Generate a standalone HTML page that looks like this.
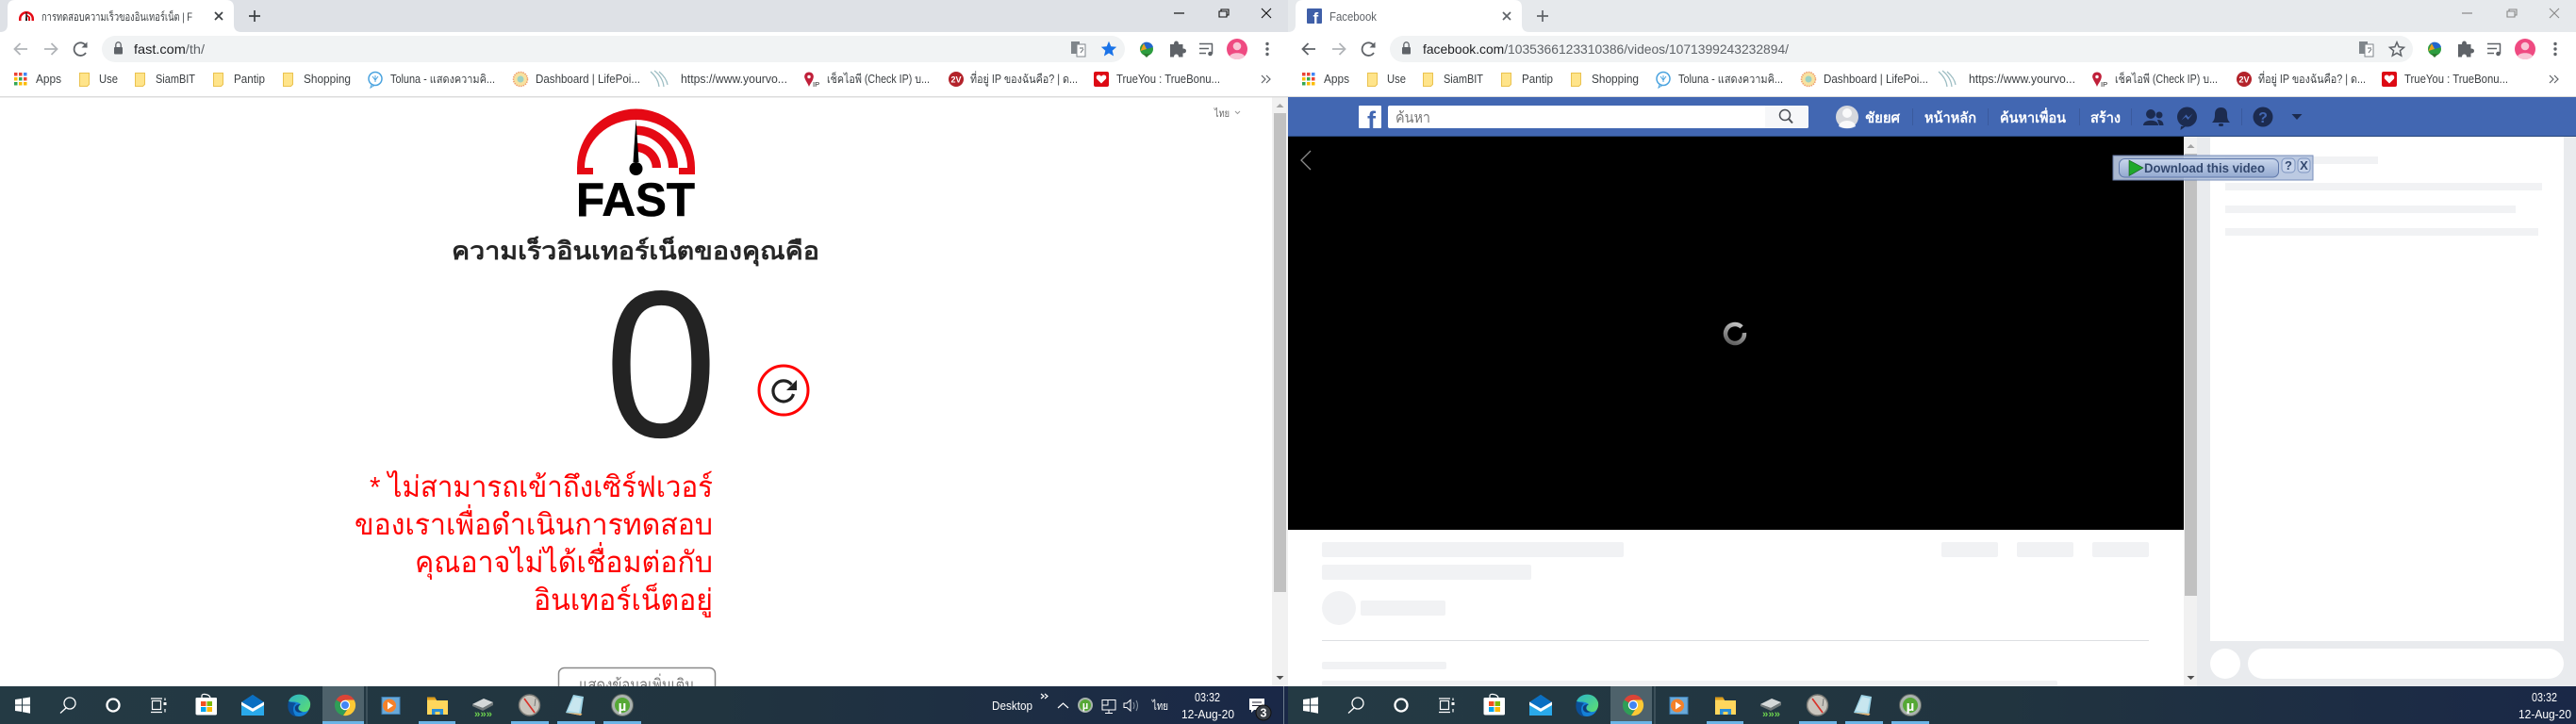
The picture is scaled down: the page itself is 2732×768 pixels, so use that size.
<!DOCTYPE html>
<html lang="th"><head><meta charset="utf-8"><title>Fast / Facebook</title>
<style>
html,body{margin:0;padding:0;background:#fff;width:2732px;height:768px;overflow:hidden}
svg{display:block;font-family:"Liberation Sans","Noto Sans CJK SC",sans-serif}
.b text{font-size:12.5px;fill:#3c4043}
.u{font-size:14px}
.t text{fill:#fff;font-size:12.5px}
.nav{font-weight:bold;font-size:15px;fill:#fff}
.r{font-size:31px;fill:#f00}
.sk{fill:#f1f2f4}
</style></head><body>
<svg width="2732" height="768" viewBox="0 0 2732 768" xmlns="http://www.w3.org/2000/svg">
<defs>
<linearGradient id="tb" x1="0" x2="1" y1="0" y2="0"><stop offset="0" stop-color="#243a44"/><stop offset=".55" stop-color="#21343f"/><stop offset="1" stop-color="#1a2847"/></linearGradient>
<linearGradient id="spin" x1="0" x2="1" y1="1" y2="0"><stop offset="0" stop-color="#555"/><stop offset="1" stop-color="#ccc"/></linearGradient>
<linearGradient id="dl" x1="0" x2="0" y1="0" y2="1"><stop offset="0" stop-color="#c9d6ec"/><stop offset="1" stop-color="#93a9d0"/></linearGradient>
<linearGradient id="edg" x1="0" x2="1" y1="0" y2="1"><stop offset="0" stop-color="#2bb5c9"/><stop offset="1" stop-color="#5ede6e"/></linearGradient>
<symbol id="folder" viewBox="0 0 11 15" overflow="visible"><path d="M.5.5H10.500V12.500L8.500 14.500H.5Z" fill="#ffe48a" stroke="#eac24f"/></symbol>
<symbol id="apps" viewBox="0 0 14 14"><g><rect x="0" y="0" width="3.500" height="3.500" fill="#ea4335"/><rect x="5" y="0" width="3.500" height="3.500" fill="#ea4335"/><rect x="10" y="0" width="3.500" height="3.500" fill="#4285f4"/><rect x="0" y="5" width="3.500" height="3.500" fill="#fbbc05"/><rect x="5" y="5" width="3.500" height="3.500" fill="#34a853"/><rect x="10" y="5" width="3.500" height="3.500" fill="#ea4335"/><rect x="0" y="10" width="3.500" height="3.500" fill="#34a853"/><rect x="5" y="10" width="3.500" height="3.500" fill="#fbbc05"/><rect x="10" y="10" width="3.500" height="3.500" fill="#fbbc05"/></g></symbol>
<g id="tbar">
<path d="M16 742 23 741V747.500H16ZM24 740.800 32 739.500V747.500H24ZM16 748.500H23V755L16 754ZM24 748.500H32V756.800L24 755.200Z" fill="#fff"/>
<circle cx="74" cy="746" r="6" fill="none" stroke="#fff" stroke-width="1.300"/><path d="M70 751 64 756.500" stroke="#fff" stroke-width="1.300"/>
<circle cx="120" cy="748" r="6.500" fill="none" stroke="#fff" stroke-width="2.300"/>
<path d="M160 741H172M160 755.500H172M175 740.500V743M175 752V755.500" stroke="#fff" stroke-width="1.200" fill="none"/><rect x="161.500" y="743.500" width="9" height="9" fill="none" stroke="#fff" stroke-width="1.200"/><rect x="173.500" y="745" width="3" height="3" fill="#fff"/>
<path d="M209 740H229Q230 740 230 741V757Q230 758.500 228.500 758.500H209.500Q207.500 758.500 207.500 757V741Q207.500 740 209 740Z" fill="#fff"/><path d="M214 740V738Q214 736 218 736.500T223 740" fill="none" stroke="#fff" stroke-width="1.200"/><rect x="213" y="744" width="5.500" height="5" fill="#f25022"/><rect x="219.500" y="744" width="5.500" height="5" fill="#7fba00"/><rect x="213" y="750" width="5.500" height="5" fill="#00a4ef"/><rect x="219.500" y="750" width="5.500" height="5" fill="#ffb900"/>
<path d="M256 745 268 737 280 745V759H256Z" fill="#2aa9ea"/><path d="M256 745 268 737 280 745 268 752Z" fill="#0a6fc2"/><path d="M256 744.500 268 751.500 280 744.500V748L268 755 256 748Z" fill="#fff"/>
<circle cx="317" cy="748.500" r="11.500" fill="#1580d6"/>
<path d="M306 744C309 735 325 733 329 745 330 752 326 756 321 755 315 754 316 749 319 747 314 743 309 745 306 744Z" fill="url(#edg)"/>
<path d="M306 744C304 752 307 759 314 760 310 755 310 749 314 746 311 745 308 745 306 744Z" fill="#0b4f98"/>
<path d="M319 747C315 749 315 754 321 755 317 757 312 755 313 750 314 748 316 747 319 747Z" fill="#0e3f7c"/>
<rect x="342" y="728" width="44" height="40" fill="#4e626b"/><rect x="342" y="765" width="44" height="3" fill="#6cb4e6"/><rect x="388" y="728" width="2" height="40" fill="#3c505a"/>
<path d="M366 748 356.500 742.500A11 11 0 0 1 376 743Z" fill="#db4437"/><path d="M366 737A11 11 0 0 1 375.500 742.500H366Z" fill="#db4437"/><path d="M356.500 742.500A11 11 0 0 0 364 759L370 748H366Z" fill="#2f9e57"/><path d="M364 759A11 11 0 0 0 375.500 742.500H366L370 750Z" fill="#fcc934"/><circle cx="366" cy="748" r="5.200" fill="#fff"/><circle cx="366" cy="748" r="4" fill="#4285f4"/>
<rect x="405" y="739.500" width="19" height="18" fill="#6aa9d8" stroke="#3e7fb3"/><circle cx="413" cy="748.500" r="7" fill="#f4812a"/><path d="M411 744.500 417 748.500 411 752.500Z" fill="#fff"/>
<path d="M453 741V758H475V743H463L461 739.500H454Z" fill="#ffd65c"/><path d="M453 739.500H461L463 742.500H453Z" fill="#dd9d1c"/><path d="M458 758V752H470V758H466.500V755H461.500V758Z" fill="#2a8fd8"/>
<path d="M501 747 513 741 523 745 512 751Z" fill="#d4d8d8"/><path d="M501 747V749L512 754 523 748V745L512 751Z" fill="#6f7778"/><text x="503" y="761" font-size="11" font-weight="bold" fill="#6cd04f" textLength="19" lengthAdjust="spacingAndGlyphs">&#187;&#187;&#187;</text>
<circle cx="561.500" cy="748" r="11" fill="#c9c5bd" stroke="#7a7a75" stroke-width="1.500"/><path d="M556 741 567 756" stroke="#d8332b" stroke-width="1.700"/><path d="M568 741 567 749" stroke="#777" stroke-width="1"/>
<path d="M600 756 608 737 619 739 616 759Z" fill="#9fd4e6"/><path d="M600 756 616 759 617.500 757Z" fill="#e6b16c"/><path d="M602 754 609 739 617 741 614 756Z" fill="#c8e6ef"/>
<circle cx="660" cy="748" r="11.500" fill="#aab2ae" stroke="#5c6360"/><circle cx="660" cy="748" r="8" fill="#55a835"/><text x="660" y="754" font-size="15" font-weight="bold" fill="#fff" text-anchor="middle">µ</text>
<rect x="444" y="765" width="39" height="3" fill="#6cb4e6"/><rect x="542" y="765" width="40" height="3" fill="#6cb4e6"/><rect x="591" y="765" width="40" height="3" fill="#6cb4e6"/><rect x="640" y="765" width="40" height="3" fill="#6cb4e6"/>
</g>
<g id="tool">
<g transform="translate(1136,44)"><rect x="0" y="0" width="9" height="13" fill="#80868b"/><rect x="6" y="3" width="9" height="13" fill="#fff" stroke="#80868b"/><path d="M9 7H13M10 12 13 8" stroke="#80868b" stroke-width="1.200"/></g>
<circle cx="1216" cy="52" r="7" fill="#2d9d3f"/><path d="M1211 47A7 7 0 0 1 1223 50L1216 52Z" fill="#2266cc"/><path d="M1209.500 54 1216 52 1213 46Z" fill="#e8a21e"/><path d="M1212 57 1216 61 1220 57Z" fill="#2d7a30"/>
<path d="M1241 47H1245Q1245 43.500 1247.500 43.500T1250 47H1254.500V51.500Q1258 51.500 1258 54T1254.500 56.500V60.500H1250Q1250 57.500 1247.500 57.500T1245 60.500H1241Z" fill="#5f6368"/>
<path d="M1272 46.500H1286M1272 51.500H1282M1272 56.500H1279" stroke="#5f6368" stroke-width="1.500"/><path d="M1285.500 46.500V57" stroke="#5f6368" stroke-width="1.500"/><circle cx="1283.500" cy="57" r="2.300" fill="#5f6368"/>
<ellipse cx="1312" cy="52" rx="11" ry="11" fill="#ef4a81"/><circle cx="1312" cy="49" r="4.300" fill="#f9c6d6"/><path d="M1304 60C1305 55 1319 55 1320 60 1316 64 1308 64 1304 60Z" fill="#f9c6d6"/>
<circle cx="1344" cy="46.500" r="1.700" fill="#5f6368"/><circle cx="1344" cy="52" r="1.700" fill="#5f6368"/><circle cx="1344" cy="57.500" r="1.700" fill="#5f6368"/>
</g>
<g id="bookicons">
<use href="#apps" x="15" y="77" width="14" height="14"/>
<use href="#folder" x="84" y="77" width="11" height="15"/><use href="#folder" x="143" y="77" width="11" height="15"/><use href="#folder" x="226" y="77" width="11" height="15"/><use href="#folder" x="300" y="77" width="11" height="15"/>
<circle cx="398" cy="83.500" r="7" fill="#fff" stroke="#4aa3df" stroke-width="1.500"/><path d="M394 90 393 93 397 90.500M398 80V87M395 81 398 85 401 81" stroke="#4aa3df" fill="none"/>
<circle cx="552" cy="84" r="7.500" fill="#f7e2a0" stroke="#ef9c6c" stroke-dasharray="1.500 1" stroke-width="1.500"/><circle cx="552" cy="84" r="3.500" fill="#9ed2c3"/>
<path d="M690 76Q698 83 699 92M694 75Q703 82 704 92M699 76Q707 83 708 90" stroke="#9bbcc2" fill="none" stroke-width="1.200"/>
<path d="M858 76.500C853.500 76.500 852.500 81 853.500 83 854.500 86 857 89 858 92 859 89 862 86 862.500 83 863.500 81 862.500 76.500 858 76.500Z" fill="#c0203a"/><circle cx="858" cy="81.500" r="1.700" fill="#fff"/><text x="862" y="92" font-size="7.500" fill="#222">IP</text>
<circle cx="1014" cy="84" r="8" fill="#b3222a"/><text x="1014" y="87.500" font-size="9" font-weight="bold" fill="#fff" text-anchor="middle">2V</text>
<rect x="1160" y="76" width="16" height="16" rx="2" fill="#dd0a14"/><path d="M1168 88.500 1163 83.500Q1162 79.500 1165.500 79.500 1167 79.500 1168 81 1169 79.500 1170.500 79.500 1174 79.500 1173 83.500Z" fill="#fff"/>
<path d="M1338 80 1342 84 1338 88M1343 80 1347 84 1343 88" stroke="#5f6368" stroke-width="1.200" fill="none"/>
</g>
</defs>

<!-- ============= WINDOW 1 ============= -->
<rect x="0" y="0" width="1366" height="34" fill="#dee1e6"/>
<rect x="0" y="34" width="1366" height="68" fill="#fff"/>
<path d="M0 34Q8 34 8 26V8Q8 0 16 0H240Q248 0 248 8V26Q248 34 256 34Z" fill="#fff"/>
<path d="M20 22V20A8 8 0 0 1 36 20V22H33.500V20A5.500 5.500 0 0 0 22.500 20V22Z" fill="#e50914"/><path d="M28 15 32 18V22H30V18.500L28 17Z" fill="#e50914"/><path d="M27.500 13 28.500 13 29 22H27Z" fill="#111"/>
<text x="44" y="22" font-size="12" fill="#3c4043" textLength="160" lengthAdjust="spacingAndGlyphs">การทดสอบความเร็วของอินเทอร์เน็ต | F</text>
<rect x="204" y="6" width="16" height="22" fill="#fff" opacity=".7"/>
<path d="M228 13 236 21M236 13 228 21" stroke="#3c4043" stroke-width="1.700"/>
<path d="M270 11V23M264 17H276" stroke="#3c4043" stroke-width="1.700"/>
<path d="M1245 14H1256" stroke="#111" stroke-width="1.200"/>
<path d="M1293 12H1301V18H1293ZM1295 12V10H1303V16H1301" fill="none" stroke="#111" stroke-width="1.100"/>
<path d="M1338 9 1348 19M1348 9 1338 19" stroke="#111" stroke-width="1.100"/>
<path d="M29 52H16M21.500 46 15.500 52 21.500 58" stroke="#b1b4b8" stroke-width="1.800" fill="none"/>
<path d="M47 52H60M54.500 46 60.500 52 54.500 58" stroke="#b1b4b8" stroke-width="1.800" fill="none"/>
<rect x="108" y="38" width="1085" height="28" rx="14" fill="#f1f3f4"/>
<path d="M92 50.500A6.800 6.800 0 1 0 91 56" fill="none" stroke="#5f6368" stroke-width="1.800"/><path d="M92.500 44.500V50.500H86.500Z" fill="#5f6368"/>
<rect x="121" y="50" width="9" height="7.500" rx="1" fill="#5f6368"/><path d="M122.800 50V47.500A2.700 2.700 0 0 1 128.200 47.500V50" fill="none" stroke="#5f6368" stroke-width="1.300"/>
<text class="u" x="142" y="57" fill="#5f6368" textLength="75" lengthAdjust="spacingAndGlyphs"><tspan fill="#202124">fast.com</tspan>/th/</text>
<use href="#tool"/>
<path d="M1176 43.800 1178.300 49.300 1184.200 49.800 1179.700 53.700 1181.100 59.500 1176 56.400 1170.900 59.500 1172.300 53.700 1167.800 49.800 1173.700 49.300Z" fill="#1a73e8"/>
<use href="#bookicons"/>
<g class="b">
<text x="38" y="88" textLength="27" lengthAdjust="spacingAndGlyphs">Apps</text>
<text x="105" y="88" textLength="20" lengthAdjust="spacingAndGlyphs">Use</text>
<text x="165" y="88" textLength="42" lengthAdjust="spacingAndGlyphs">SiamBIT</text>
<text x="248" y="88" textLength="33" lengthAdjust="spacingAndGlyphs">Pantip</text>
<text x="322" y="88" textLength="50" lengthAdjust="spacingAndGlyphs">Shopping</text>
<text x="414" y="88" textLength="111" lengthAdjust="spacingAndGlyphs">Toluna - แสดงความคิ...</text>
<text x="568" y="88" textLength="111" lengthAdjust="spacingAndGlyphs">Dashboard | LifePoi...</text>
<text x="722" y="88" textLength="113" lengthAdjust="spacingAndGlyphs">https://www.yourvo...</text>
<text x="877" y="88" textLength="109" lengthAdjust="spacingAndGlyphs">เช็คไอพี (Check IP) บ...</text>
<text x="1029" y="88" textLength="114" lengthAdjust="spacingAndGlyphs">ที่อยู่ IP ของฉันคือ? | ด...</text>
<text x="1184" y="88" textLength="110" lengthAdjust="spacingAndGlyphs">TrueYou : TrueBonu...</text>
</g>
<rect x="0" y="102" width="2732" height="1.500" fill="#dcdcdc"/>

<!-- Fast content -->
<path d="M612 185V178A62.500 62.500 0 0 1 737 178V185H720V178H729A54.500 51 0 0 0 620 178H629V185Z" fill="#e50914"/>
<path d="M675 133.500A44 44.500 0 0 1 719 178H709A34.500 35 0 0 0 675 143Z" fill="#e50914"/>
<path d="M675 151.700A26.500 26.300 0 0 1 701 178H691.700A17 17 0 0 0 675 161Z" fill="#e50914"/>
<path d="M674.500 126 677.500 172H671.500Z" fill="#000"/><circle cx="674.500" cy="179" r="7" fill="#000"/>
<text x="611" y="229" font-size="50" font-weight="bold" fill="#000" stroke="#000" stroke-width=".6" textLength="126" lengthAdjust="spacingAndGlyphs">FAST</text>
<text x="479" y="275" font-size="26" font-weight="bold" fill="#262626" textLength="390" lengthAdjust="spacingAndGlyphs">ความเร็วอินเทอร์เน็ตของคุณคือ</text>
<text x="641" y="463" font-size="222" fill="#232323" textLength="120" lengthAdjust="spacingAndGlyphs">0</text>
<circle cx="831" cy="414" r="26" fill="#fff" stroke="#f00" stroke-width="3"/>
<path d="M839.500 408A11 11 0 1 0 841.500 418" fill="none" stroke="#222" stroke-width="3.200"/><path d="M845 403V414H834Z" fill="#222"/>
<text class="r" x="392" y="527" textLength="364" lengthAdjust="spacingAndGlyphs">* ไม่สามารถเข้าถึงเซิร์ฟเวอร์</text>
<text class="r" x="376" y="567" textLength="380" lengthAdjust="spacingAndGlyphs">ของเราเพื่อดำเนินการทดสอบ</text>
<text class="r" x="440" y="607" textLength="316" lengthAdjust="spacingAndGlyphs">คุณอาจไม่ได้เชื่อมต่อกับ</text>
<text class="r" x="566" y="647" textLength="190" lengthAdjust="spacingAndGlyphs">อินเทอร์เน็ตอยู่</text>
<rect x="592.500" y="708.500" width="166" height="40" rx="6" fill="#fff" stroke="#8a8a8a" stroke-width="1.500"/>
<text x="614" y="732" font-size="17" fill="#777" textLength="122" lengthAdjust="spacingAndGlyphs">แสดงข้อมูลเพิ่มเติม</text>
<text x="1288" y="124" font-size="11" fill="#666" textLength="16" lengthAdjust="spacingAndGlyphs">ไทย</text>
<path d="M1310 118 1312.500 120.500 1315 118" fill="none" stroke="#999" stroke-width="1"/>
<rect x="1349" y="103.500" width="17" height="625" fill="#f1f1f1"/>
<rect x="1351" y="120" width="13" height="508" fill="#c1c1c1"/>
<path d="M1353.500 114 1357.500 110 1361.500 114Z" fill="#a3a3a3"/>
<path d="M1353.500 717 1361.500 717 1357.500 721Z" fill="#505050"/>

<!-- ============= WINDOW 2 ============= -->
<g transform="translate(1366,0)">
<rect x="0" y="0" width="1366" height="34" fill="#e6e9ec"/>
<rect x="0" y="34" width="1366" height="68" fill="#fff"/>
<path d="M0 34Q8 34 8 26V8Q8 0 16 0H240Q248 0 248 8V26Q248 34 256 34Z" fill="#fff"/>
<rect x="20" y="9" width="16" height="16" rx="1" fill="#3f5fa8"/>
<text x="26.500" y="25" font-size="17" font-weight="bold" fill="#fff">f</text>
<text x="44" y="22" font-size="12.500" fill="#5f6368" textLength="50" lengthAdjust="spacingAndGlyphs">Facebook</text>
<path d="M228 13 236 21M236 13 228 21" stroke="#5f6368" stroke-width="1.700"/>
<path d="M270 11V23M264 17H276" stroke="#5f6368" stroke-width="1.700"/>
<path d="M1245 14H1256" stroke="#888" stroke-width="1.200"/>
<path d="M1293 12H1301V18H1293ZM1295 12V10H1303V16H1301" fill="none" stroke="#888" stroke-width="1.100"/>
<path d="M1338 9 1348 19M1348 9 1338 19" stroke="#888" stroke-width="1.100"/>
<path d="M29 52H16M21.500 46 15.500 52 21.500 58" stroke="#5f6368" stroke-width="1.800" fill="none"/>
<path d="M47 52H60M54.500 46 60.500 52 54.500 58" stroke="#b1b4b8" stroke-width="1.800" fill="none"/>
<rect x="108" y="38" width="1085" height="28" rx="14" fill="#f1f3f4"/>
<path d="M92 50.500A6.800 6.800 0 1 0 91 56" fill="none" stroke="#5f6368" stroke-width="1.800"/><path d="M92.500 44.500V50.500H86.500Z" fill="#5f6368"/>
<rect x="121" y="50" width="9" height="7.500" rx="1" fill="#5f6368"/><path d="M122.800 50V47.500A2.700 2.700 0 0 1 128.200 47.500V50" fill="none" stroke="#5f6368" stroke-width="1.300"/>
<text class="u" x="143" y="57" fill="#5f6368" textLength="388" lengthAdjust="spacingAndGlyphs"><tspan fill="#202124">facebook.com</tspan>/1035366123310386/videos/1071399243232894/</text>
<use href="#tool"/>
<path d="M1176 44.800 1178.100 49.800 1183.500 50.300 1179.400 53.800 1180.700 59.100 1176 56.300 1171.300 59.100 1172.600 53.800 1168.500 50.300 1173.900 49.800Z" fill="none" stroke="#5f6368" stroke-width="1.500"/>
<use href="#bookicons"/>
<g class="b">
<text x="38" y="88" textLength="27" lengthAdjust="spacingAndGlyphs">Apps</text>
<text x="105" y="88" textLength="20" lengthAdjust="spacingAndGlyphs">Use</text>
<text x="165" y="88" textLength="42" lengthAdjust="spacingAndGlyphs">SiamBIT</text>
<text x="248" y="88" textLength="33" lengthAdjust="spacingAndGlyphs">Pantip</text>
<text x="322" y="88" textLength="50" lengthAdjust="spacingAndGlyphs">Shopping</text>
<text x="414" y="88" textLength="111" lengthAdjust="spacingAndGlyphs">Toluna - แสดงความคิ...</text>
<text x="568" y="88" textLength="111" lengthAdjust="spacingAndGlyphs">Dashboard | LifePoi...</text>
<text x="722" y="88" textLength="113" lengthAdjust="spacingAndGlyphs">https://www.yourvo...</text>
<text x="877" y="88" textLength="109" lengthAdjust="spacingAndGlyphs">เช็คไอพี (Check IP) บ...</text>
<text x="1029" y="88" textLength="114" lengthAdjust="spacingAndGlyphs">ที่อยู่ IP ของฉันคือ? | ด...</text>
<text x="1184" y="88" textLength="110" lengthAdjust="spacingAndGlyphs">TrueYou : TrueBonu...</text>
</g>
</g>
<rect x="1366" y="102" width="1366" height="1.500" fill="#dcdcdc"/>

<!-- Facebook -->
<rect x="1366" y="103" width="1366" height="42" fill="#4267b2"/>
<rect x="1366" y="144" width="1366" height="1.500" fill="#29487d"/>
<rect x="1441" y="112" width="24" height="24" rx="1" fill="#fff"/>
<text x="1450" y="137" font-size="27" font-weight="bold" fill="#4267b2">f</text>
<rect x="1472" y="112" width="446" height="24" rx="2" fill="#fff"/>
<path d="M1872 112H1916Q1918 112 1918 114V134Q1918 136 1916 136H1872Z" fill="#f6f7f9"/>
<circle cx="1893" cy="122" r="5.500" fill="none" stroke="#4b4f56" stroke-width="1.500"/><path d="M1897 126 1901 130.500" stroke="#4b4f56" stroke-width="2"/>
<text x="1480" y="130" font-size="15.500" fill="#777" textLength="37" lengthAdjust="spacingAndGlyphs">ค้นหา</text>
<circle cx="1959" cy="124" r="12" fill="#d6d8dd"/><circle cx="1959" cy="120" r="5" fill="#fff" opacity=".85"/><path d="M1950 134C1951 126 1967 126 1968 134 1963 137 1955 137 1950 134Z" fill="#fff" opacity=".85"/>
<text class="nav" x="1978" y="130" textLength="37" lengthAdjust="spacingAndGlyphs">ชัยยศ</text>
<rect x="2028" y="115" width="1" height="18" fill="#3a5a9d"/>
<text class="nav" x="2041" y="130" textLength="55" lengthAdjust="spacingAndGlyphs">หน้าหลัก</text>
<rect x="2108" y="115" width="1" height="18" fill="#3a5a9d"/>
<text class="nav" x="2121" y="130" textLength="70" lengthAdjust="spacingAndGlyphs">ค้นหาเพื่อน</text>
<rect x="2205" y="115" width="1" height="18" fill="#3a5a9d"/>
<text class="nav" x="2217" y="130" textLength="32" lengthAdjust="spacingAndGlyphs">สร้าง</text>
<rect x="2260" y="115" width="1" height="18" fill="#3a5a9d"/>
<circle cx="2281" cy="121" r="5" fill="#1c2b4f"/><path d="M2273 133C2273 126 2289 126 2289 133Z" fill="#1c2b4f"/><circle cx="2290" cy="122" r="3.500" fill="#1c2b4f"/><path d="M2290 133H2294.500C2294.500 129 2292 127 2288 127Z" fill="#1c2b4f"/>
<circle cx="2319.500" cy="124" r="10.500" fill="#1c2b4f"/><path d="M2313 134 2312.500 138 2318 134Z" fill="#1c2b4f"/><path d="M2313.500 127.500 2318.500 121.500 2321 124.500 2325.500 120.500 2320.500 127 2318 124Z" fill="#4267b2"/>
<path d="M2346 130C2349 127 2349 124 2349 121 2349 116 2352 114 2355.500 114 2359 114 2362 116 2362 121 2362 124 2362 127 2365 130Z" fill="#1c2b4f"/><rect x="2353" y="131" width="5" height="3" rx="1.500" fill="#1c2b4f"/>
<rect x="2377" y="115" width="1" height="18" fill="#3a5a9d"/>
<circle cx="2400" cy="124" r="10.500" fill="#1c2b4f"/><text x="2400" y="130" font-size="16" font-weight="bold" fill="#4267b2" text-anchor="middle">?</text>
<path d="M2430.500 121H2441.500L2436 127Z" fill="#1c2b4f"/>

<!-- video -->
<rect x="1366" y="145" width="950" height="417" fill="#000"/>
<path d="M1390 160 1380 170 1390 180" fill="none" stroke="#8a8a8a" stroke-width="1.300"/>
<path d="M1849.400 350.600A10 10 0 1 0 1849.400 357.400" transform="rotate(-25 1840 354)" fill="none" stroke="url(#spin)" stroke-width="4.500"/>
<rect x="1366" y="562" width="950" height="166" fill="#fff"/>
<rect class="sk" x="1402" y="575" width="320" height="16" rx="2"/>
<rect class="sk" x="2059" y="575" width="60" height="16" rx="2"/><rect class="sk" x="2139" y="575" width="60" height="16" rx="2"/><rect class="sk" x="2219" y="575" width="60" height="16" rx="2"/>
<rect class="sk" x="1402" y="599" width="222" height="16" rx="2"/>
<circle class="sk" cx="1420" cy="645" r="18"/>
<rect class="sk" x="1443" y="637" width="90" height="16" rx="2"/>
<rect x="1402" y="679" width="877" height="1" fill="#dddfe2"/>
<rect class="sk" x="1402" y="702" width="132" height="8" rx="2"/>
<rect class="sk" x="1402" y="722" width="780" height="8" rx="2"/>

<!-- right side -->
<rect x="2316" y="145" width="416" height="583" fill="#e9ebee"/>
<rect x="2316" y="145" width="14" height="583" fill="#f1f1f1"/>
<rect x="2317" y="163" width="13" height="469" fill="#c1c1c1"/>
<path d="M2319.500 157 2323.500 153 2327.500 157Z" fill="#a3a3a3"/>
<path d="M2319.500 717 2327.500 717 2323.500 721Z" fill="#505050"/>
<rect x="2344" y="145" width="375" height="535" fill="#fff"/>
<rect class="sk" x="2360" y="166" width="162" height="8"/>
<rect class="sk" x="2360" y="194" width="336" height="8"/>
<rect class="sk" x="2360" y="218" width="308" height="8"/>
<rect class="sk" x="2360" y="242" width="332" height="8"/>
<circle cx="2360" cy="704" r="16" fill="#fff"/>
<rect x="2384" y="688" width="335" height="32" rx="16" fill="#fff"/>

<!-- download overlay -->
<rect x="2241" y="165" width="212" height="26" fill="#b7c6e0" stroke="#6f87b5" opacity=".93"/>
<rect x="2247.500" y="168.500" width="169" height="19.500" rx="6" fill="url(#dl)" stroke="#5f78aa"/>
<path d="M2258 170 2273 178 2258 186.500Z" fill="#1fa82c" stroke="#14551c" stroke-width=".6"/>
<text x="2274" y="183" font-size="14" font-weight="bold" fill="#33486f" textLength="128" lengthAdjust="spacingAndGlyphs">Download this video</text>
<rect x="2420" y="168" width="14" height="15" rx="4" fill="#c6d3ea" stroke="#7e95c0"/><text x="2427" y="180" font-size="13" font-weight="bold" fill="#33486f" text-anchor="middle">?</text>
<rect x="2437" y="168" width="13" height="15" rx="4" fill="#c6d3ea" stroke="#7e95c0"/><text x="2443.500" y="180" font-size="13" font-weight="bold" fill="#33486f" text-anchor="middle">X</text>

<!-- ============= TASKBARS ============= -->
<rect x="0" y="728" width="1366" height="40" fill="url(#tb)"/>
<rect x="1366" y="728" width="1366" height="40" fill="url(#tb)"/>
<use href="#tbar"/>
<use href="#tbar" x="1366"/>
<g class="t">
<text x="1052" y="753" textLength="43" lengthAdjust="spacingAndGlyphs" fill="#ddd">Desktop</text>
<path d="M1104 736 1107 738.500 1104 741M1108 736 1111 738.500 1108 741" fill="none" stroke="#fff" stroke-width="1.200"/>
<path d="M1122 751 1127.500 746 1133 751" fill="none" stroke="#fff" stroke-width="1.200"/>
<circle cx="1151" cy="748" r="8" fill="#a8b3ac"/><circle cx="1151" cy="748" r="6" fill="#55a835"/><text x="1151" y="752" font-size="11" font-weight="bold" text-anchor="middle" style="font-size:11px">µ</text>
<path d="M1169 742.500H1183V753H1169ZM1176 753V756.500M1172 756.500H1180M1169 742.500H1175V748H1169Z" fill="none" stroke="#fff" stroke-width="1"/>
<path d="M1192 746H1195L1199 742.500V754L1195 750.500H1192Z" fill="none" stroke="#fff"/><path d="M1202 745Q1204 748.500 1202 752M1205 743Q1208 748.500 1205 754" fill="none" stroke="#8a97a5"/>
<text x="1222" y="753" textLength="17" lengthAdjust="spacingAndGlyphs">ไทย</text>
<text x="1267" y="744" textLength="27" lengthAdjust="spacingAndGlyphs">03:32</text>
<text x="1253" y="762" textLength="56" lengthAdjust="spacingAndGlyphs">12-Aug-20</text>
<path d="M1325 741H1341V753H1330L1327 756V753H1325Z" fill="#fff"/><path d="M1328 745H1338M1328 748.500H1338" stroke="#223" stroke-width="1"/>
<circle cx="1340" cy="756" r="8" fill="#3a3f47" stroke="#111"/><text x="1340" y="760.500" font-weight="bold" text-anchor="middle">3</text>
<text x="2685" y="744" textLength="27" lengthAdjust="spacingAndGlyphs">03:32</text>
<text x="2671" y="762" textLength="56" lengthAdjust="spacingAndGlyphs">12-Aug-20</text>
</g>
<rect x="1361" y="728" width="1" height="40" fill="#6d7c8c"/>
</svg>
</body></html>
